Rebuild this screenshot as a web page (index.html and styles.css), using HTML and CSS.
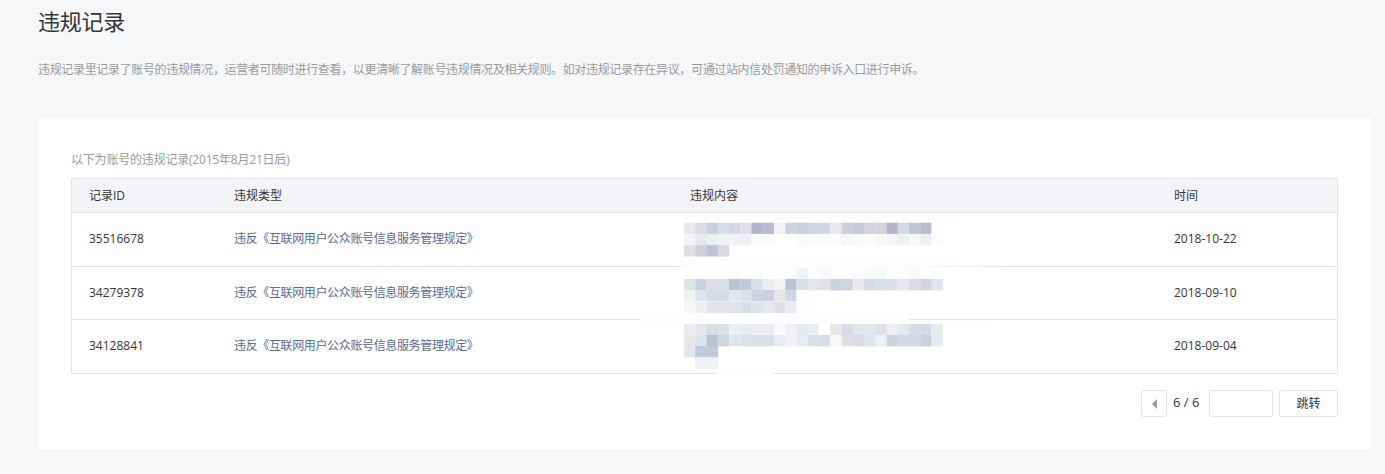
FILE: index.html
```html
<!DOCTYPE html>
<html lang="zh-CN">
<head>
<meta charset="utf-8">
<title>违规记录</title>
<link rel="stylesheet" href="styles.css">
</head>
<body>
<main class="page">
  <h1 class="title">违规记录</h1>
  <p class="intro">违规记录里记录了账号的违规情况，运营者可随时进行查看，以更清晰了解账号违规情况及相关规则。如对违规记录存在异议，可通过站内信处罚通知的申诉入口进行申诉。</p>
  <section class="card">
    <p class="caption">以下为账号的违规记录(2015年8月21日后)</p>
    <div class="table-wrap">
      <div class="table">
        <div class="row head">
          <div class="c-id">记录ID</div><div class="c-type">违规类型</div><div class="c-body">违规内容</div><div class="c-time">时间</div>
        </div>
        <div class="row">
          <div class="c-id">35516678</div><div class="c-type"><a class="link">违反《互联网用户公众账号信息服务管理规定》</a></div><div class="c-body"></div><div class="c-time">2018-10-22</div>
        </div>
        <div class="row">
          <div class="c-id">34279378</div><div class="c-type"><a class="link">违反《互联网用户公众账号信息服务管理规定》</a></div><div class="c-body"></div><div class="c-time">2018-09-10</div>
        </div>
        <div class="row">
          <div class="c-id">34128841</div><div class="c-type"><a class="link">违反《互联网用户公众账号信息服务管理规定》</a></div><div class="c-body"></div><div class="c-time">2018-09-04</div>
        </div>
      </div>
      <svg class="mosaic" width="1267" height="196" viewBox="0 0 1267 196" aria-hidden="true" id="mosaic"></svg>
    </div>
    <div class="pager">
      <button class="pg-btn" aria-label="上一页"><svg width="5" height="10" viewBox="0 0 5 10"><path d="M5 0V10L0 5Z" fill="#9a9a9a"/></svg></button>
      <span class="pg-num">6 / 6</span>
      <input class="pg-input" type="text" aria-label="页码">
      <button class="pg-go">跳转</button>
    </div>
  </section>
</main>
<script src="mosaic.js"></script>
</body>
</html>
```
FILE: styles.css
```css
* { box-sizing: border-box; }
html, body { margin: 0; height: 100%; }
body {
  background: #f6f7f9;
  font-family: "Open Sans", "Noto Sans CJK SC", sans-serif;
  font-size: 12px;
  line-height: 18px;
  color: #353535;
  overflow: hidden;
}
.page { padding: 0 14px 0 38px; }
.title {
  margin: 0;
  padding-top: 5px;
  font-size: 22px;
  line-height: 32px;
  font-weight: 400;
  letter-spacing: -0.25px;
  color: #353535;
}
.intro {
  margin: 0;
  padding-top: 24px;
  line-height: 18px;
  letter-spacing: -0.34px;
  color: #9a9a9a;
}
.card {
  margin-top: 39px;
  height: 331px;
  padding: 33px 33px 0;
  background: #fff;
  border-radius: 2px;
}
.caption {
  margin: 0 0 9px;
  line-height: 18px;
  letter-spacing: -0.2px;
  color: #9a9a9a;
}
.table-wrap { position: relative; }
.table { border: 1px solid #e4e5ea; }
.row {
  display: grid;
  grid-template-columns: 145px 456px 484px 1fr;
  padding-left: 17px;
  height: 54px;
  align-items: center;
  border-top: 1px solid #e4e5ea;
  color: #353535;
}
.row:nth-child(2), .row:nth-child(4) { padding-bottom: 2px; }
.row:nth-child(3) { height: 53px; }
.row.head { height: 33px; border-top: 0; background: #f3f4f8; }
.link { color: #5a6a94; letter-spacing: -0.36px; }
.mosaic { position: absolute; left: 0; top: 0; overflow: visible; pointer-events: none; }
.pager {
  display: flex;
  justify-content: flex-end;
  align-items: center;
  gap: 6px;
  margin-top: 16px;
}
.pg-btn, .pg-go, .pg-input {
  height: 27px;
  padding: 0;
  background: #fff;
  border: 1px solid #e4e5ea;
  border-radius: 2px;
  font: inherit;
  color: #353535;
}
.pg-btn { width: 26px; display: flex; align-items: center; justify-content: center; }
.pg-num { width: 30px; margin-bottom: 4px; font-size: 13px; }
.pg-input { width: 64px; }
.pg-go { width: 59px; }
```
FILE: mosaic.js
```js
var C = 11.25, X0 = 613;
var blocks = [
  [44.7, ["e8e8ee","dcdae4","c9cfdf","d9dde8","d2d9e3","e0e0e6","b1b6cc","b9bdd3","f2f3f7","cfd1dd","c9cfdf","d2d3e1","d2d6e3","e8e8ee","cfcdd6","c2cbdd","d3d2dd","d4d2dd","b1b7cd","d5d9e5","c2c5d6","b8bccf","fbfdfe"]],
  [55.9, ["f3f3f5","e8e8ec","ebeef4","f3f1f3","eff2f6","eeeff4","fbfbfc","fafafb","ffffff","ffffff","f9fafc","fcfcfd","fcfcfd","fbfbfc","f5f6fa","f8f9fb","fcfcfd","f8f8fb","f3f3f5","f0f0f4","f8f8fa","efeff3","fbfcfd"]],
  [67.1, ["dfdfe6","d0d0dc","bcc5d8","d8d8e2"]],
  [90.3, ["ffffff","fdfdfe","fcfcfd","fbfcfd","fbfbfc","ffffff","fbfcfd","ffffff","fdfdfe","fbfcfc","f0f1f5","fcfcfd","f7f8fa","fdfdfe","fdfdfe","fafbfc","f9fafb","f7f8fa","fefefe","fbfbfb","fafafa","fdfdfd","fcfdfd"]],
  [101, ["e0e0e8","c5d1e3","dfdce6","d9e1e8","bdc3d5","c2c8d8","d7dfe9","ecedf2","f3f3f5","bcc3d5","dcdfe8","e3e7ed","e3e1e8","c9d2e0","d4d3de","e9eaf0","d5d9e5","dddfe8","dddfe8","e4e8ef","dcdae5","d2d4e0","e1e4ec"]],
  [112, ["f1f1f3","e0e5e9","d8dae6","d8dae6","e4e6ef","dcdfe9","cfd1de","cdcfdf","e6e6ea","d2d6e2","fffdfd"]],
  [123.7, ["f5f6f8","edf0f2","e4e3ea","e4e4e9","e1e1ea","d8dee8","dce4ea","e8e8ec","dfdfe8","e9ecf0","fefcfc"]],
  [146, ["ebebef","e5e7f0","dadde6","dce0e9","ecf0f3","e9ebee","ebecee","ecedf0","f8f9fc","f0f0f2","e6e8f1","ecedf1","ffffff","e8e8eb","d9dce6","e3e6ee","e3e6ee","dde0ea","efedf1","e5e7f0","d9dce6","d9dce6","e7ebee"]],
  [157, ["e6e7ea","d9e4ec","bbc2d4","cdd8e5","e2e5e9","dae2e9","d9e0e8","d9e0e8","eaebef","f0f2f6","e9ebf0","dde0e8","dadde5","faf9f8","e1dee3","d9dce6","e1e4ec","eff0f4","ced3e0","d3dae4","d3d8e3","cbd0de","e7ebef"]],
  [168, ["e3e7f0","c0c8d9","c0c8d9"]],
  [179.7, ["ffffff","f0f1f5","f0f1f5"]]
];
/* faint white smears left by the retouching, covering parts of the row borders */
var smears = [
  "601,35 884,35 890,44 625,44",
  "607,77 819,77 932,88 611,91",
  "569,135 838,135 838,146 569,146",
  "838,142 930,142 920,146 838,146",
  "639,194 702,194 702,197 650,197"
];
var svg = document.getElementById("mosaic");
var NS = "http://www.w3.org/2000/svg";
function rect(x, y, w, h, fill) {
  var r = document.createElementNS(NS, "rect");
  r.setAttribute("x", x); r.setAttribute("y", y);
  r.setAttribute("width", w); r.setAttribute("height", h);
  r.setAttribute("fill", fill);
  svg.appendChild(r);
}
smears.forEach(function (p) {
  var s = document.createElementNS(NS, "polygon");
  s.setAttribute("points", p);
  s.setAttribute("fill", "#fdfdfd");
  svg.appendChild(s);
});
blocks.forEach(function (b) {
  b[1].forEach(function (c, i) { rect(X0 + i * C, b[0], C + 0.2, 11.4, "#" + c); });
});
```
